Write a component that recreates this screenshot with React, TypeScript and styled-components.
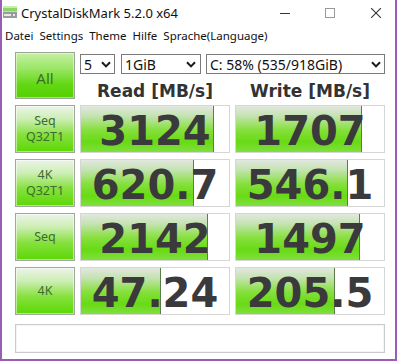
import React from "react";
import styled, { createGlobalStyle } from "styled-components";

const Global = createGlobalStyle`
  html, body { margin: 0; padding: 0; background: #ffffff; }
  #root { width: 400px; height: 363px; }
`;

const Window = styled.div`
  width: 397px;
  height: 361px;
  box-sizing: border-box;
  border: 2px solid #9a5cb5;
  border-top: none;
  background: #ffffff;
  display: flex;
  flex-direction: column;
  font-family: "Noto Sans", "Open Sans", sans-serif;
  color: #000;
`;

const TitleBar = styled.div`
  height: 25px;
  display: flex;
  align-items: center;
`;

const AppIcon = styled.svg`
  width: 16px;
  height: 16px;
  flex: none;
  margin-top: -1px;
`;

const Title = styled.div`
  margin-left: 3px;
  font-size: 13px;
  color: #111;
  flex: 1;
  white-space: nowrap;
`;

const Controls = styled.div`
  display: flex;
  height: 25px;
  align-self: flex-start;
`;

const CtrlButton = styled.div<{ $w: number; $pr?: number }>`
  width: ${(p) => p.$w}px;
  height: 25px;
  display: flex;
  align-items: center;
  justify-content: ${(p) => (p.$pr !== undefined ? "flex-end" : "center")};
  padding-right: ${(p) => p.$pr ?? 0}px;
  box-sizing: border-box;
`;

const MenuBar = styled.div`
  height: 20px;
  display: flex;
  align-items: center;
  gap: 6px;
  padding-left: 3px;
  font-size: 11.5px;
  color: #111;
`;

const Main = styled.div`
  padding: 7px 0 0 13px;
  display: grid;
  grid-template-columns: 60px 150px 150px;
  column-gap: 5px;
  row-gap: 6px;
  grid-auto-rows: auto;
`;

const AllButton = styled.div`
  height: 47px;
  box-sizing: border-box;
  border: 1px solid #9aa596;
  background: linear-gradient(#c6f0a4 0%, #9ae665 35%, #62d814 70%, #54d000 100%);
  box-shadow: inset 0 0 0 1px rgba(255, 255, 255, 0.45);
  display: flex;
  align-items: center;
  justify-content: center;
  font-size: 15px;
  color: #3d6d2c;
  padding-top: 4px;
`;

const TopRight = styled.div`
  grid-column: 2 / 4;
  height: 47px;
  display: flex;
  flex-direction: column;
`;

const SelectRow = styled.div`
  margin-top: 2px;
  display: flex;
  height: 20px;
`;

const SelectBox = styled.div<{ $w: number; $ml: number; $pr: number }>`
  width: ${(p) => p.$w}px;
  margin-left: ${(p) => p.$ml}px;
  height: 20px;
  box-sizing: border-box;
  border: 1px solid #7a7a7a;
  background: #fff;
  display: flex;
  align-items: center;
  justify-content: space-between;
  padding: 0 ${(p) => p.$pr}px 0 3px;
  font-size: 14px;
  color: #111;
  white-space: nowrap;
`;

const Chevron = styled.svg`
  width: 10px;
  height: 7px;
  flex: none;
`;

const Headers = styled.div`
  margin-top: 10px;
  display: grid;
  grid-template-columns: 150px 150px;
  column-gap: 5px;
  line-height: 15px;
  height: 15px;
  font-family: "DejaVu Sans", Verdana, sans-serif;
  font-weight: bold;
  font-size: 17px;
  color: #333;
  text-align: center;
`;

const TestButton = styled.div`
  height: 48px;
  box-sizing: border-box;
  border: 1px solid #a0a89c;
  background: linear-gradient(#edf4e8 0%, #cdeeb5 28%, #86e13e 62%, #5cd804 100%);
  box-shadow: inset 0 0 0 1px rgba(255, 255, 255, 0.5);
  display: flex;
  flex-direction: column;
  align-items: center;
  justify-content: center;
  font-size: 12.5px;
  line-height: 16px;
  color: #3e6b30;
`;

const ResultBox = styled.div`
  height: 48px;
  box-sizing: border-box;
  border: 1px solid #d6d6d6;
  background: #fff;
  position: relative;
  overflow: hidden;
`;

const Fill = styled.div`
  position: absolute;
  left: 0;
  top: 0;
  bottom: 0;
  box-sizing: border-box;
  border-right: 1px solid #5b7d4c;
  background: linear-gradient(#e2e8df 0%, #c3e3b0 22%, #86e03c 52%, #68da14 78%, #7fe03e 100%);
`;

const Value = styled.div`
  position: relative;
  height: 100%;
  display: flex;
  align-items: center;
  justify-content: center;
  padding-top: 3px;
  box-sizing: border-box;
  font-family: "DejaVu Sans", Verdana, sans-serif;
  font-weight: bold;
  font-size: 40px;
  color: #3a3a3c;
`;

const Comment = styled.div`
  grid-column: 1 / -1;
  margin-top: 3px;
  height: 29px;
  box-sizing: border-box;
  border: 1px solid #cbcbcb;
  box-shadow: inset 0 0 0 1px #f4f4f4;
  background: #fff;
`;

const ChevronIcon = () => (
  <Chevron viewBox="0 0 10 7">
    <polyline points="1,1.2 5,5.4 9,1.2" fill="none" stroke="#1a1a1a" strokeWidth="2" />
  </Chevron>
);

const rows = [
  { l1: "Seq", l2: "Q32T1", r: "3124", rw: 133, w: "1707", ww: 126 },
  { l1: "4K", l2: "Q32T1", r: "620.7", rw: 113, w: "546.1", ww: 112 },
  { l1: "Seq", l2: "", r: "2142", rw: 127, w: "1497", ww: 124 },
  { l1: "4K", l2: "", r: "47.24", rw: 80, w: "205.5", ww: 99 },
];

export default function App() {
  return (
    <>
      <Global />
      <Window>
        <TitleBar>
          <AppIcon viewBox="0 0 16 16">
            <rect x="1" y="2" width="14" height="5" fill="#8fd46a" />
            <rect x="1" y="2" width="14" height="2" fill="#c4eeaa" />
            <rect x="1" y="7" width="14" height="7" fill="#9a9a9a" />
            <rect x="1" y="7" width="14" height="1" fill="#cfcfcf" />
            <rect x="2" y="10" width="7" height="2" fill="#e8e8e8" />
            <rect x="11" y="10" width="2" height="2" fill="#e8e8e8" />
          </AppIcon>
          <Title>CrystalDiskMark 5.2.0 x64</Title>
          <Controls>
            <CtrlButton $w={45}>
              <svg width="10" height="10" viewBox="0 0 10 10">
                <line x1="0" y1="5.5" x2="10" y2="5.5" stroke="#333" strokeWidth="1" />
              </svg>
            </CtrlButton>
            <CtrlButton $w={45}>
              <svg width="10" height="10" viewBox="0 0 10 10">
                <rect x="0.5" y="0.5" width="9" height="9" fill="none" stroke="#999" strokeWidth="1" />
              </svg>
            </CtrlButton>
            <CtrlButton $w={43} $pr={14}>
              <svg width="10" height="10" viewBox="0 0 10 10">
                <line x1="0" y1="0" x2="10" y2="10" stroke="#333" strokeWidth="1.1" />
                <line x1="10" y1="0" x2="0" y2="10" stroke="#333" strokeWidth="1.1" />
              </svg>
            </CtrlButton>
          </Controls>
        </TitleBar>
        <MenuBar>
          <span>Datei</span>
          <span>Settings</span>
          <span>Theme</span>
          <span>Hilfe</span>
          <span>Sprache(Language)</span>
        </MenuBar>
        <Main>
          <AllButton>All</AllButton>
          <TopRight>
            <SelectRow>
              <SelectBox $w={35} $ml={0} $pr={3}>
                <span>5</span>
                <ChevronIcon />
              </SelectBox>
              <SelectBox $w={80} $ml={6} $pr={4}>
                <span>1GiB</span>
                <ChevronIcon />
              </SelectBox>
              <SelectBox $w={179} $ml={5} $pr={3}>
                <span>C: 58% (535/918GiB)</span>
                <ChevronIcon />
              </SelectBox>
            </SelectRow>
            <Headers>
              <div>Read [MB/s]</div>
              <div>Write [MB/s]</div>
            </Headers>
          </TopRight>
          {rows.map((row, i) => (
            <React.Fragment key={i}>
              <TestButton>
                <span>{row.l1}</span>
                {row.l2 && <span>{row.l2}</span>}
              </TestButton>
              <ResultBox>
                <Fill style={{ width: row.rw }} />
                <Value>{row.r}</Value>
              </ResultBox>
              <ResultBox>
                <Fill style={{ width: row.ww }} />
                <Value>{row.w}</Value>
              </ResultBox>
            </React.Fragment>
          ))}
          <Comment />
        </Main>
      </Window>
    </>
  );
}
